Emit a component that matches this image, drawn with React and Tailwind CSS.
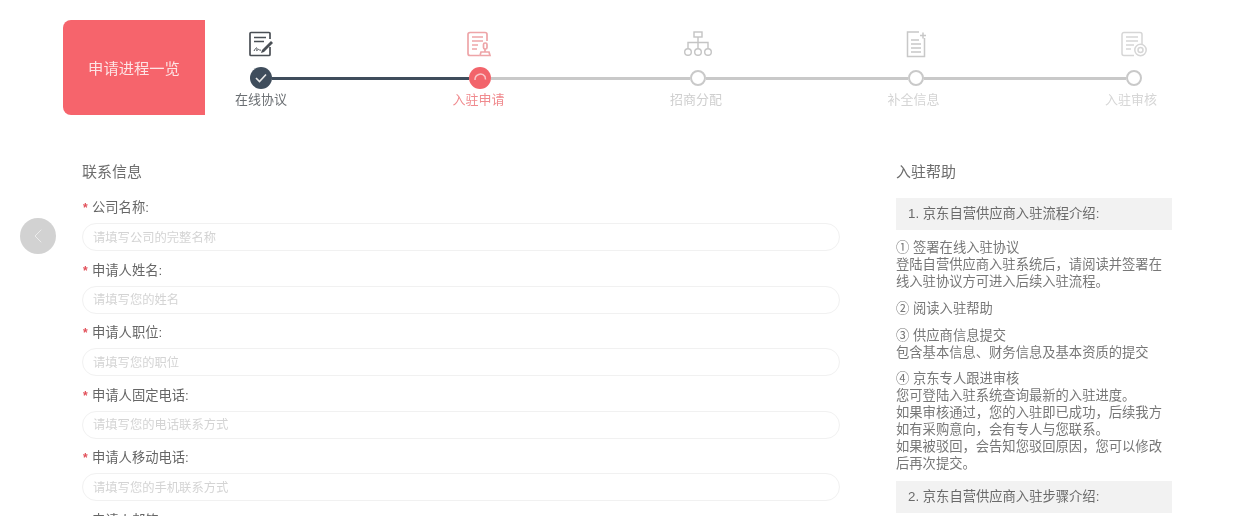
import { ChevronLeft } from 'lucide-react';

const CJK = 'font-["Liberation_Sans","Noto_Sans_CJK_SC",sans-serif]';

const IconSign = () => (
  <svg width="28" height="28" viewBox="0 0 28 28" fill="none" stroke="#4a4f55" strokeWidth="1.700">
    <path d="M23 9V3.500a1 1 0 0 0-1-1H4a1 1 0 0 0-1 1v21a1 1 0 0 0 1 1h18a1 1 0 0 0 1-1V17" />
    <path d="M7 7.500h12M7 11.500h10" strokeWidth="1.400" />
    <path d="M15 20l9-9 2 2-9 9-3 1z" fill="#4a4f55" stroke="none" />
    <path d="M7 21c1.500-3 3-4 3-2.500s-1 2.500 0 2 1.500-1.500 2-1 .5 1 2 .5" strokeWidth="1" />
  </svg>
);

const IconApply = () => (
  <svg width="28" height="28" viewBox="0 0 28 28" fill="none" stroke="#eea5a8" strokeWidth="1.700">
    <path d="M14 25.500H5a2 2 0 0 1-2-2v-19a2 2 0 0 1 2-2h15a2 2 0 0 1 2 2V11" />
    <path d="M7 7h11M7 11h11M7 15h6M7 19h5" strokeWidth="1.400" />
    <rect x="18.500" y="13" width="3.500" height="6" rx="1.500" />
    <path d="M20 19v2.500M16 22h8l1 3.500h-10z" />
  </svg>
);

const IconTree = () => (
  <svg width="30" height="28" viewBox="0 0 30 28" fill="none" stroke="#c4c4c4" strokeWidth="1.400">
    <rect x="11" y="2" width="8" height="5" />
    <path d="M15 7v5M5 18v-5.500h20V18M15 12v6" />
    <circle cx="5" cy="22" r="3.300" />
    <circle cx="15" cy="22" r="3.300" />
    <circle cx="25" cy="22" r="3.300" />
  </svg>
);

const IconDoc = () => (
  <svg width="22" height="28" viewBox="0 0 22 28" fill="none" stroke="#c8c8c8" strokeWidth="1.500">
    <path d="M14 2H2.500v24.500h17V8M15 5.500h6M18 2.500v6" />
    <path d="M6 10h8M6 14h10M6 18h10M6 22h10" strokeWidth="1.300" />
  </svg>
);

const IconReview = () => (
  <svg width="28" height="28" viewBox="0 0 28 28" fill="none" stroke="#d6d6d6" strokeWidth="1.500">
    <path d="M14 25.500H4a2 2 0 0 1-2-2v-19a2 2 0 0 1 2-2h16a2 2 0 0 1 2 2V14" />
    <path d="M6 7h12M6 11h12M6 15h8M6 19h5" strokeWidth="1.300" />
    <circle cx="20.500" cy="20" r="5.700" />
    <circle cx="20.500" cy="20" r="2.500" />
  </svg>
);

const steps = [
  { name: '在线协议', Icon: IconSign, color: 'text-[#6b6f73]' },
  { name: '入驻申请', Icon: IconApply, color: 'text-[#f08a8e]' },
  { name: '招商分配', Icon: IconTree, color: 'text-[#cfcfcf]' },
  { name: '补全信息', Icon: IconDoc, color: 'text-[#d4d4d4]' },
  { name: '入驻审核', Icon: IconReview, color: 'text-[#d6d6d6]' },
];

const fields = [
  { label: '公司名称:', hint: '请填写公司的完整名称' },
  { label: '申请人姓名:', hint: '请填写您的姓名' },
  { label: '申请人职位:', hint: '请填写您的职位' },
  { label: '申请人固定电话:', hint: '请填写您的电话联系方式' },
  { label: '申请人移动电话:', hint: '请填写您的手机联系方式' },
  { label: '申请人邮箱:', hint: '请填写您的邮箱' },
];

function OpenDot() {
  return <div className="w-4 h-4 shrink-0 rounded-full border-2 border-[#c9c9c9] bg-white" />;
}

function Stepper() {
  return (
    <div className="ml-[28px] w-[929px] pt-[10px]">
      <div className="flex justify-between h-[30px]">
        {steps.map(({ name, Icon }) => (
          <div key={name} className="w-14 flex justify-center"><Icon /></div>
        ))}
      </div>
      <div className="flex items-center h-[22px] mt-[7px] pl-[17px]">
        <div className="w-[22px] h-[22px] shrink-0 rounded-full bg-[#3f4d5c] flex items-center justify-center">
          <svg width="12" height="10" viewBox="0 0 12 10" fill="none" stroke="#e8e8e8" strokeWidth="1.600"><path d="M1 5l3.500 3.500L11 1.500" /></svg>
        </div>
        <div className="w-[197px] h-[3px] bg-[#3f4d5c]" />
        <div className="w-[22px] h-[22px] shrink-0 rounded-full bg-[#f2646b] flex items-center justify-center">
          <svg width="14" height="14" viewBox="0 0 14 14" fill="none" stroke="#f9c5c7" strokeWidth="1.500"><path d="M2 9a5.500 5.500 0 0 1 10-3.500l.5 3" /></svg>
        </div>
        <div className="w-[199px] h-[3px] bg-[#c9c9c9]" />
        <OpenDot />
        <div className="w-[202px] h-[3px] bg-[#c9c9c9]" />
        <OpenDot />
        <div className="w-[202px] h-[3px] bg-[#c9c9c9]" />
        <OpenDot />
      </div>
      <div className="flex justify-between mt-[2px] pr-[3px]">
        {steps.map(({ name, color }) => (
          <div key={name} className={`w-14 text-center text-[13px] leading-[17px] whitespace-nowrap ${color}`}>{name}</div>
        ))}
      </div>
    </div>
  );
}

function Field({ label, hint }) {
  return (
    <div className="h-[62.500px]">
      <div className="flex items-center h-[18px] pt-[2px] text-[13.300px] text-[#666]">
        <span className="w-[10px] text-[#e2505a] text-[12px] font-bold pl-[1px]">*</span>
        {label}
      </div>
      <div className="mt-[7px] h-[28px] rounded-full border border-[#f1f1f1] bg-white px-[10px] pt-[2px] flex items-center text-[12.300px] text-[#d4d4d4]">
        {hint}
      </div>
    </div>
  );
}

function HelpBar({ children }) {
  return <div className="h-[32px] bg-[#f2f2f2] pl-[12px] flex items-center text-[13.300px] text-[#6a6a6a]">{children}</div>;
}

export default function App() {
  return (
    <div className={`relative h-[516px] w-[1254px] overflow-hidden bg-white blur-[0.7px] ${CJK}`}>
      <div className="pl-[63px] pt-[20px] flex">
        <div className="w-[142px] h-[95px] rounded-l-lg bg-[#f6646c] flex items-center justify-center pt-[3px] text-[15.300px] text-[#fde3e4]">
          申请进程一览
        </div>
        <Stepper />
      </div>

      <div className="flex pl-[82px] pt-[47px]">
        <div className="w-[758px]">
          <h2 className="text-[15px] leading-[20px] text-[#6e6e6e]">联系信息</h2>
          <div className="mt-[16px]">
            {fields.map((f) => <Field key={f.label} {...f} />)}
          </div>
        </div>

        <div className="ml-[56px] w-[276px]">
          <h2 className="text-[15px] leading-[20px] text-[#6e6e6e]">入驻帮助</h2>
          <div className="mt-[16px]"><HelpBar>1. 京东自营供应商入驻流程介绍:</HelpBar></div>
          <div className="mt-[9px] text-[13.300px] leading-[17px] text-[#777] whitespace-nowrap">
            <p>① 签署在线入驻协议<br />登陆自营供应商入驻系统后，请阅读并签署在<br />线入驻协议方可进入后续入驻流程。</p>
            <p className="mt-[10px]">② 阅读入驻帮助</p>
            <p className="mt-[10px]">③ 供应商信息提交<br />包含基本信息、财务信息及基本资质的提交</p>
            <p className="mt-[9px]">④ 京东专人跟进审核<br />您可登陆入驻系统查询最新的入驻进度。<br />如果审核通过，您的入驻即已成功，后续我方<br />如有采购意向，会有专人与您联系。<br />如果被驳回，会告知您驳回原因，您可以修改<br />后再次提交。</p>
          </div>
          <div className="mt-[9px]"><HelpBar>2. 京东自营供应商入驻步骤介绍:</HelpBar></div>
        </div>
      </div>

      {/* floating back button over the page edge */}
      <div className="absolute left-[20px] top-[218px] w-9 h-9 rounded-full bg-[#d2d2d2] flex items-center justify-center">
        <ChevronLeft className="w-6 h-6 text-[#ececec]" strokeWidth={1} />
      </div>
    </div>
  );
}
